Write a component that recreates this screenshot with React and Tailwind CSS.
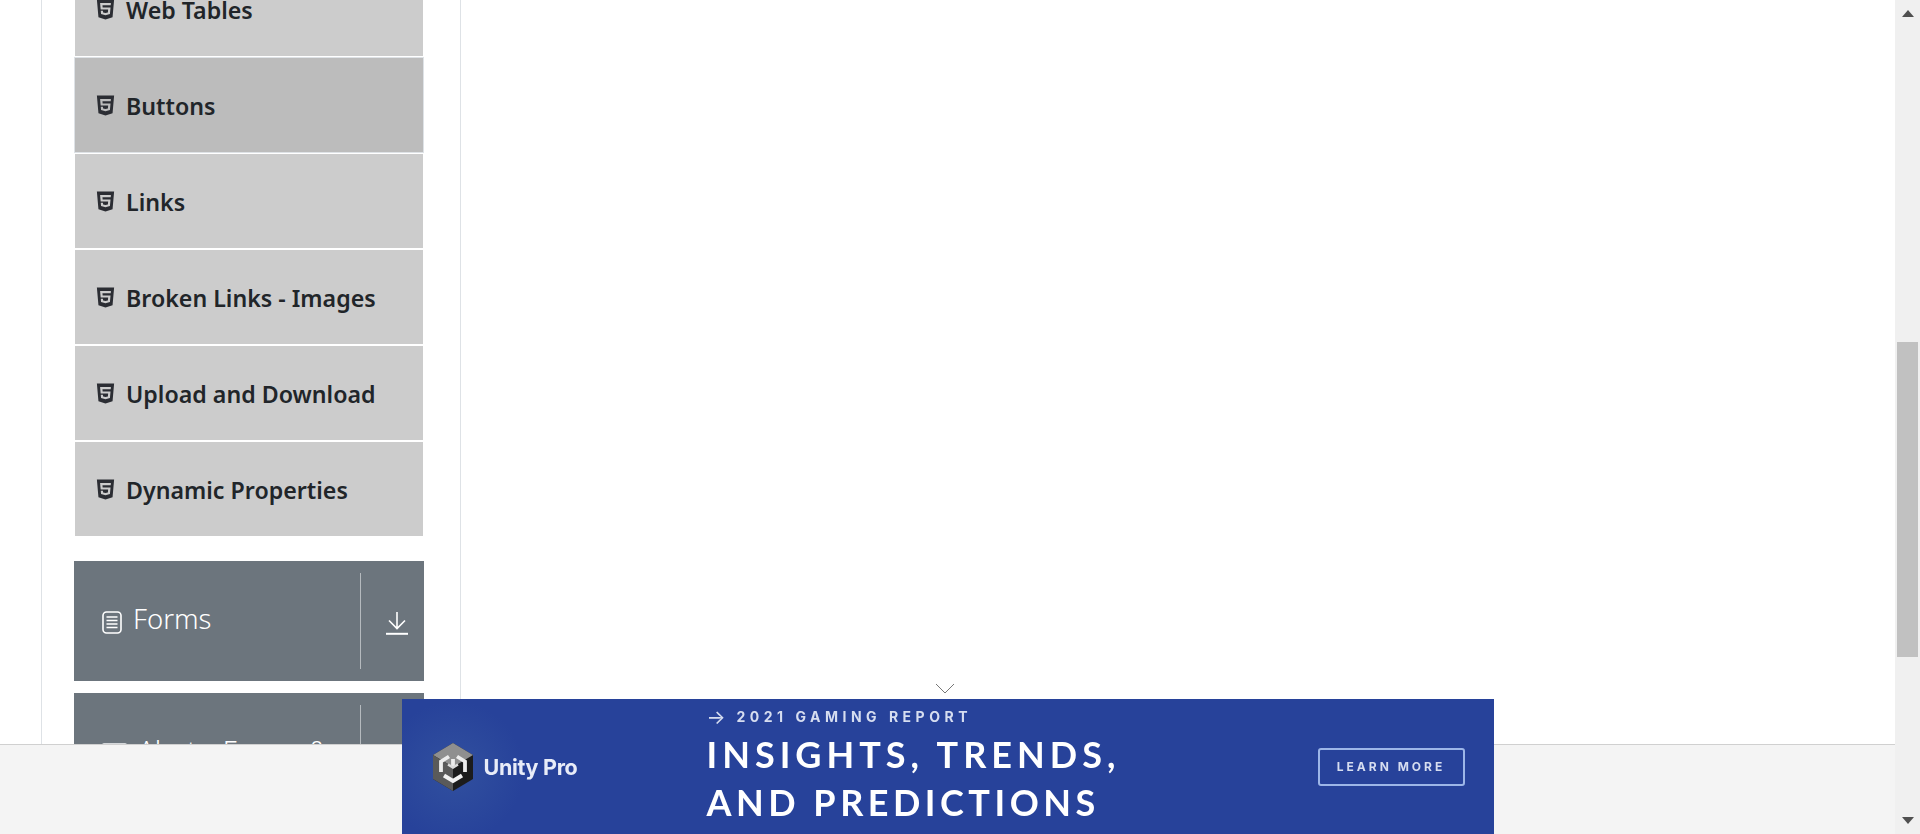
import { FaHtml5 } from "react-icons/fa";

const items = ["Web Tables", "Buttons", "Links", "Broken Links - Images", "Upload and Download", "Dynamic Properties"];

function FormsIcon() {
  return (
    <svg width="20" height="23" viewBox="0 0 20 23" fill="none" stroke="white" className="shrink-0">
      <rect x="1" y="1" width="18" height="21" rx="3.5" strokeWidth="1.6" />
      <path d="M4.5 6h11M4.5 9.5h11M4.5 13h11M4.5 16.5h11" strokeWidth="1.3" />
    </svg>
  );
}

function WindowIcon() {
  return (
    <svg width="25" height="23" viewBox="0 0 25 23" fill="none" stroke="#d5d8db" className="shrink-0">
      <rect x="1" y="1" width="23" height="21" rx="1" strokeWidth="2" />
    </svg>
  );
}

function DownloadIcon() {
  return (
    <svg width="22" height="24" viewBox="0 0 22 24" fill="none" stroke="white" strokeWidth="1.6">
      <path d="M11 1v16M3 9.5l8 8 8-8" />
      <path d="M0 22.8h22" strokeWidth="2" />
    </svg>
  );
}

function MenuGroup({ icon, children }) {
  return (
    <div className="flex h-[120px] bg-[#6c757d] text-white">
      <div className="flex w-[286px] gap-[11px] pl-[28px] pt-[40px] text-[27.5px] leading-[36px] font-light">
        <span className="pt-[10px]">{icon}</span>
        <span>{children}</span>
      </div>
      <div className="my-[12px] flex w-[64px] items-center justify-center border-l border-[#b5babe] pl-[9px] pt-[4px]">
        <DownloadIcon />
      </div>
    </div>
  );
}

function UnityLogo() {
  return (
    <svg width="44" height="48" viewBox="0 0 42 48">
      <path d="M21 0L41 12V36L21 48L1 36V12Z" fill="#1c1c1c" />
      <path d="M21 0L41 12L21 24L1 12Z" fill="#8f8f8f" />
      <path d="M1 12L21 24V48L1 36Z" fill="#5a5a5a" />
      <path d="M17 13.5L9 18.5V29M25 13.5L33 18.5V29M21 16v7" fill="none" stroke="#ececec" strokeWidth="3.8" />
      <path d="M12 32.5L21 38l9-5.5" fill="none" stroke="#f2f2f2" strokeWidth="4" />
      <path d="M16 21.5l5 3 5-3" fill="none" stroke="#dcdcdc" strokeWidth="2.4" />
    </svg>
  );
}

function Ad() {
  return (
    <div className="flex h-[136px] w-[1092px] items-center bg-[#27429a] bg-[radial-gradient(circle_at_52px_72px,#31509f_0,#27429a_70px)] pl-[29px] text-white">
      <div className="flex w-[276px] items-center gap-[9px] blur-[0.4px]">
        <UnityLogo />
        <span className="text-[21.5px] font-bold text-[#e8ecf8] font-['Inter',sans-serif] tracking-[-0.3px]">Unity Pro</span>
      </div>
      <div className="w-[611px] blur-[0.5px] font-['Lato',sans-serif]">
        <div className="flex items-center text-[14px] leading-[18px] font-bold tracking-[4.5px] text-[#d6ddf0] font-['Inter',sans-serif]">
          <span className="w-[30px] text-[20px] font-normal tracking-normal">→</span>2021 GAMING REPORT
        </div>
        <div className="mt-[4px] text-[36px] leading-[48px] font-bold tracking-[5px] whitespace-nowrap">INSIGHTS, TRENDS,</div>
        <div className="text-[36px] leading-[48px] font-bold tracking-[4.5px] whitespace-nowrap">AND PREDICTIONS</div>
      </div>
      <div className="flex h-[38px] w-[147px] items-center justify-center rounded-[3px] border-2 border-[#9db6e8] text-[12px] font-bold tracking-[3px] text-[#d6ddf0] blur-[0.4px] font-['Inter',sans-serif]">
        LEARN MORE
      </div>
    </div>
  );
}

export default function App() {
  return (
    <div className="flex h-[834px] overflow-hidden bg-white font-['Noto_Sans',sans-serif] text-[#212529]">
      <div className="relative flex-1 overflow-hidden">
        <div className="ml-[41px] -mt-[39px] w-[420px] border-x border-[#dee2e6] pb-[40px] pl-[32px]">
          <ul className="w-[350px]">
            {items.map((item) => (
              <li
                key={item}
                className={
                  item === "Buttons"
                    ? "flex h-[96px] items-center gap-[9px] border border-[#dee2e6] bg-[#bcbcbc] pl-[19px] pt-[4px] text-[23.2px] font-semibold"
                    : "flex h-[96px] items-center gap-[9px] border border-white bg-[#cccccc] pl-[19px] pt-[4px] text-[23.2px] font-semibold"
                }
              >
                <FaHtml5 size={23} className="mb-[3px] shrink-0 text-[#2b2d33]" />
                <span className="leading-none">{item}</span>
              </li>
            ))}
          </ul>
          <div className="mt-[24px] flex w-[350px] flex-col gap-[12px]">
            <MenuGroup icon={<FormsIcon />}>Forms</MenuGroup>
            <MenuGroup icon={<WindowIcon />}>Alerts, Frame &amp; Windows</MenuGroup>
          </div>
        </div>

        <div className="absolute bottom-0 left-0 right-0 h-[90px] border-t border-[#d0d0d0] bg-[#f4f4f4]">
          <div className="-mt-[62px] flex flex-col items-center">
            <svg width="20" height="12" viewBox="0 0 20 12" fill="none" stroke="#777" strokeWidth="1" className="mb-[4px] -ml-[6px]">
              <path d="M1 1l9 9 9-9" />
            </svg>
            <Ad />
          </div>
        </div>
      </div>

      <div className="flex w-[25px] flex-col items-center bg-[#f0f0f0]">
        <svg width="12" height="7" viewBox="0 0 12 7" className="mt-[10px] shrink-0">
          <path d="M6 0l6 7H0z" fill="#505050" />
        </svg>
        <div className="mt-[325px] h-[315px] w-[21px] shrink-0 bg-[#c1c1c1]" />
        <div className="flex-1" />
        <svg width="12" height="7" viewBox="0 0 12 7" className="mb-[10px] shrink-0">
          <path d="M6 7L0 0h12z" fill="#505050" />
        </svg>
      </div>
    </div>
  );
}
